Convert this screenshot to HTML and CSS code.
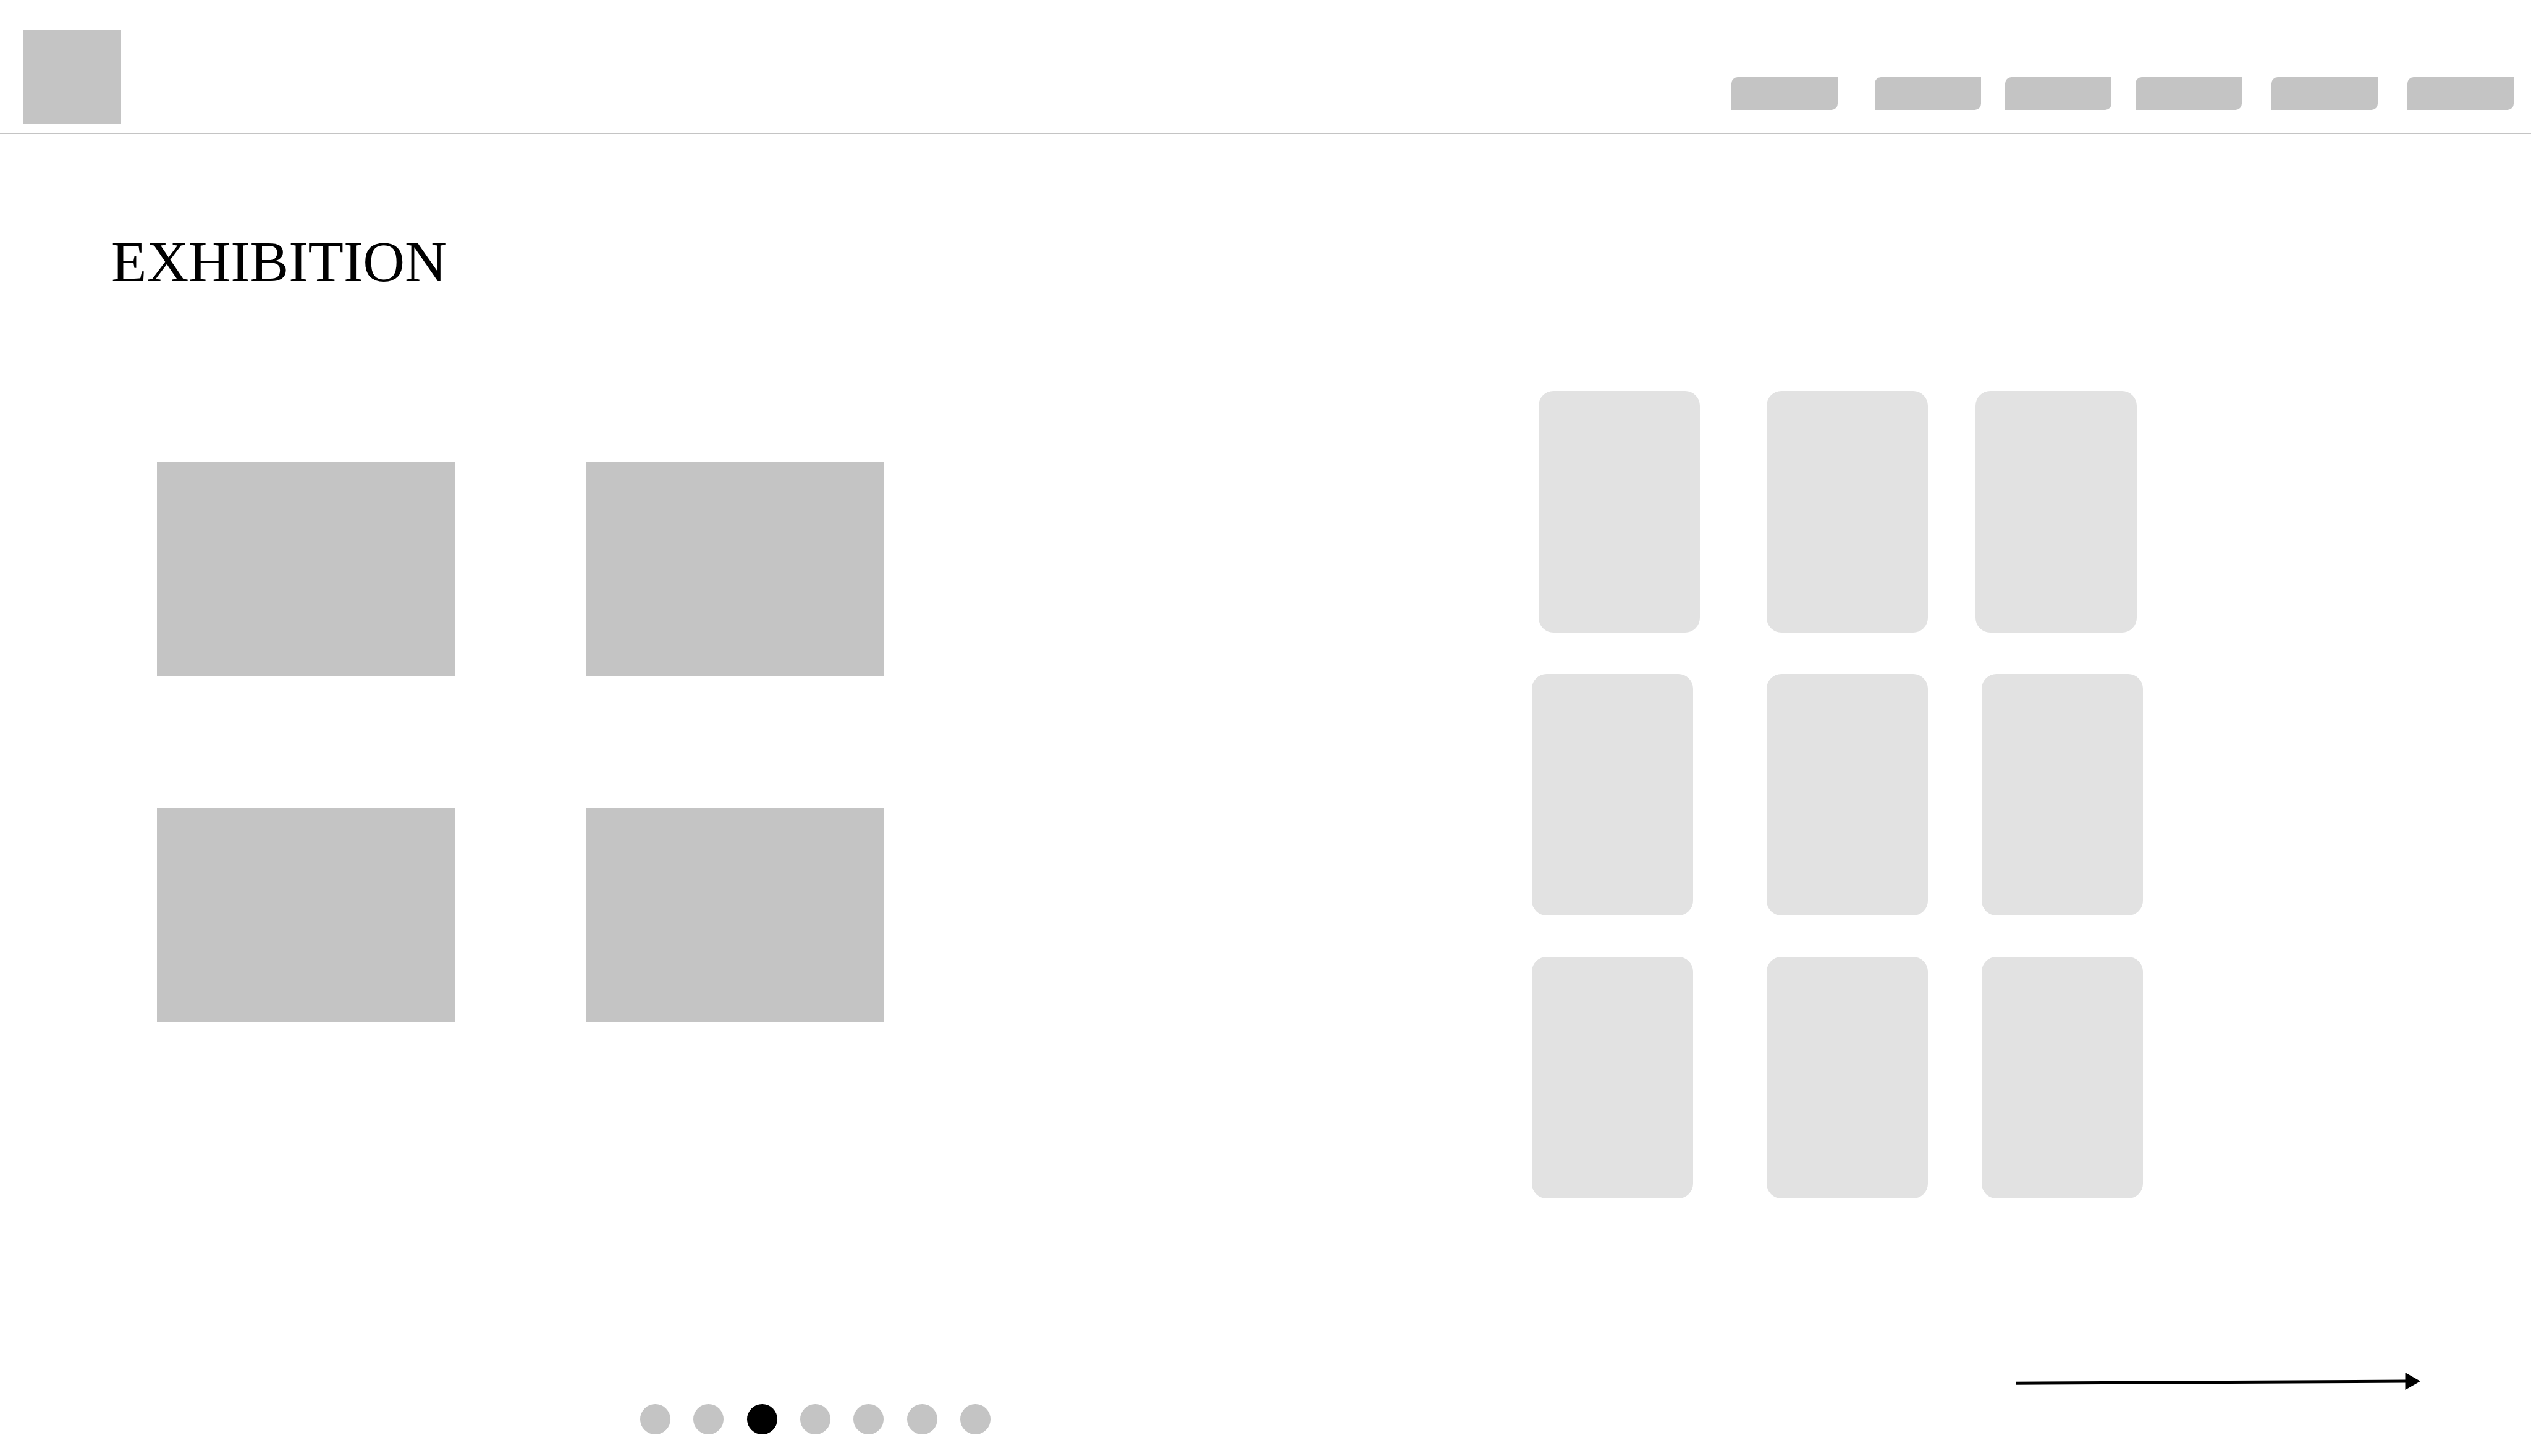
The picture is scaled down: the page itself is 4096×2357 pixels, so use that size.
FILE: index.html
```html
<!DOCTYPE html>
<html lang="en">
<head>
  <meta charset="utf-8">
  <meta name="viewport" content="width=device-width, initial-scale=1">
  <title>Exhibition</title>
  <link rel="stylesheet" href="styles.css">
</head>
<body>
  <header class="site-header">
    <a class="logo" href="#" aria-label="Home"></a>
    <nav class="site-nav" aria-label="Main">
      <a class="nav-link nav-link-lead" href="#" aria-label="Section 1"></a>
      <a class="nav-link" href="#" aria-label="Section 2"></a>
      <a class="nav-link" href="#" aria-label="Section 3"></a>
      <a class="nav-link nav-link-spaced" href="#" aria-label="Section 4"></a>
      <a class="nav-link nav-link-spaced" href="#" aria-label="Section 5"></a>
      <a class="nav-link" href="#" aria-label="Section 6"></a>
    </nav>
  </header>

  <main class="exhibition">
    <h1 class="title">EXHIBITION</h1>
    <div class="galleries">
      <section class="works" aria-label="Works">
        <div class="work"></div>
        <div class="work"></div>
        <div class="work"></div>
        <div class="work"></div>
      </section>
      <section class="cards" aria-label="Collection">
        <div class="card-row card-row-inset">
          <div class="card"></div>
          <div class="card"></div>
          <div class="card"></div>
        </div>
        <div class="card-row">
          <div class="card"></div>
          <div class="card"></div>
          <div class="card"></div>
        </div>
        <div class="card-row">
          <div class="card"></div>
          <div class="card"></div>
          <div class="card"></div>
        </div>
      </section>
    </div>
  </main>

  <footer class="pager">
    <div class="dots">
      <button class="dot" type="button" aria-label="Page 1"></button>
      <button class="dot" type="button" aria-label="Page 2"></button>
      <button class="dot dot-current" type="button" aria-label="Page 3" aria-current="page"></button>
      <button class="dot" type="button" aria-label="Page 4"></button>
      <button class="dot" type="button" aria-label="Page 5"></button>
      <button class="dot" type="button" aria-label="Page 6"></button>
      <button class="dot" type="button" aria-label="Page 7"></button>
    </div>
    <a class="next" href="#" aria-label="Next page">
      <svg class="next-arrow" viewBox="0 0 655 28" width="655" height="28" aria-hidden="true">
        <path d="M0 17.2L632 14" stroke="#000" stroke-width="5" fill="none"/>
        <path d="M630.500 0L655 14L630.500 28Z" fill="#000"/>
      </svg>
    </a>
  </footer>
</body>
</html>
```
FILE: styles.css
```css
* {
  box-sizing: border-box;
}

body {
  display: flex;
  flex-direction: column;
  min-height: 100vh;
  margin: 0;
  background: #fff;
  color: #000;
  font-family: "Liberation Serif", "Times New Roman", serif;
}

/* Header */
.site-header {
  display: flex;
  justify-content: space-between;
  align-items: flex-end;
  padding: 49px 28px 14px 37px;
  border-bottom: 2px solid #c4c4c4;
}

.logo {
  width: 159px;
  height: 152px;
  background: #c4c4c4;
}

.site-nav {
  display: flex;
  gap: 39px;
  padding-bottom: 23px;
}

.nav-link {
  width: 172px;
  height: 53px;
  border-radius: 10px 0;
  background: #c4c4c4;
}

.nav-link-lead {
  margin-right: 21px;
}

.nav-link-spaced {
  margin-right: 9px;
}

/* Content */
.exhibition {
  padding-top: 152px;
}

.title {
  margin: 0 0 156px;
  padding-left: 180px;
  font-size: 94px;
  font-weight: 400;
  line-height: 108px;
}

.galleries {
  display: flex;
  justify-content: space-between;
  align-items: flex-start;
  padding: 0 628px 0 254px;
}

.works {
  display: grid;
  grid-template-columns: repeat(2, 482px);
  grid-auto-rows: 346px;
  gap: 214px 213px;
  padding-top: 115px;
}

.work {
  background: #c4c4c4;
}

.cards {
  display: flex;
  flex-direction: column;
  gap: 67px;
  width: 989px;
}

.card-row {
  display: grid;
  grid-template-columns: 380px 348px 261px;
}

.card-row-inset {
  grid-template-columns: 369px 338px 261px;
  padding-left: 11px;
}

.card {
  width: 261px;
  height: 391px;
  border-radius: 24px;
  background: #e2e2e2;
}

/* Pager */
.pager {
  display: flex;
  justify-content: space-between;
  margin-top: auto;
  padding: 0 179px 35px 1036px;
}

.dots {
  display: flex;
  justify-content: space-between;
  align-items: flex-end;
  width: 567px;
  height: 100px;
}

.dot {
  width: 49px;
  height: 49px;
  padding: 0;
  border: 0;
  border-radius: 50%;
  background: #c4c4c4;
}

.dot-current {
  background: #000;
}

.next-arrow {
  display: block;
}
```
